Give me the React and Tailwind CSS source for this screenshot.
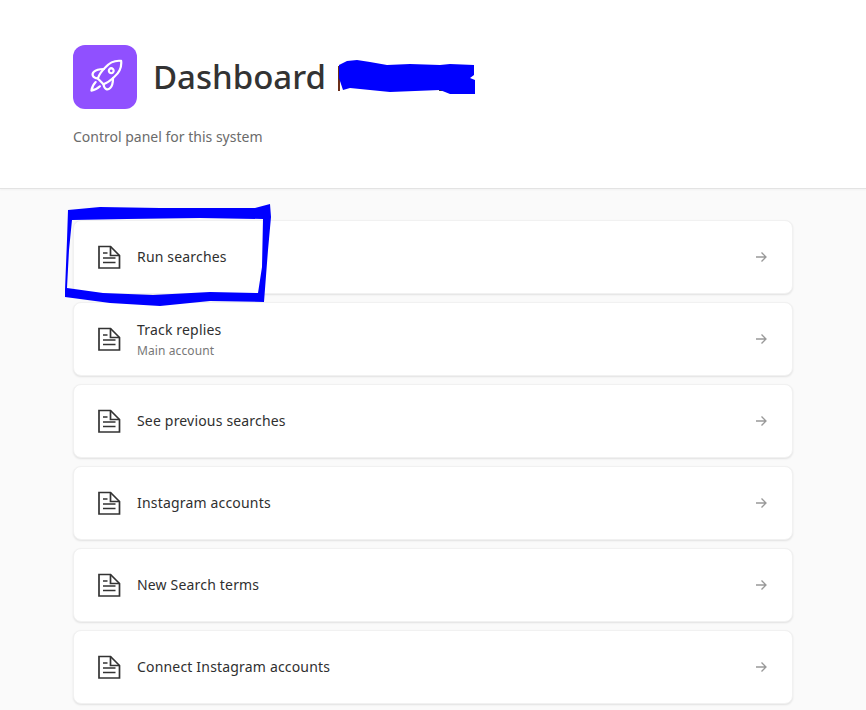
const items = [
  { title: "Run searches" },
  { title: "Track replies", sub: "Main account" },
  { title: "See previous searches" },
  { title: "Instagram accounts" },
  { title: "New Search terms" },
  { title: "Connect Instagram accounts" },
];

function DocIcon() {
  return (
    <svg width="24" height="24" viewBox="0 0 24 24" fill="none" stroke="#333333" strokeWidth="1.7" className="shrink-0">
      <path d="M1 1.5H12.5L21.5 10.5V23H1Z" />
      <path d="M12.5 1.5V10.5H21.5" />
      <path d="M5 8H9.5M5 13H17.5M5 17.5H17.5" />
    </svg>
  );
}

function ArrowIcon() {
  return (
    <svg width="12" height="12" viewBox="0 0 12 12" fill="none" stroke="#999999" strokeWidth="1.3" className="shrink-0">
      <path d="M1 6h10M6.5 1.5 11 6l-4.5 4.5" />
    </svg>
  );
}

function Rocket() {
  return (
    <svg width="36" height="36" viewBox="0 0 36 36" fill="none" stroke="#ffffff" strokeWidth="2.2" strokeLinejoin="round" strokeLinecap="round">
      <g transform="translate(20 16) rotate(45)">
        <path d="M0 -20C5 -16 7 -10 6.5 -4C6.5 1 5.5 6 4 9H-4C-5.5 6 -6.5 1 -6.5 -4C-7 -10 -5 -16 0 -20Z" />
        <circle cx="0" cy="-6" r="2.4" />
        <path d="M-6.5 -2C-9.5 1 -11.5 4 -11.5 7C-11.5 11 -8 12 -4 9" />
        <path d="M6.5 -2C9.5 1 11.5 4 11.5 7C11.5 11 8 12 4 9" />
        <path d="M-3 13C-3 17 -1.5 20 0 22C1.5 20 3 17 3 13" />
      </g>
    </svg>
  );
}

export default function App() {
  return (
    <div className="relative h-[710px] overflow-hidden bg-[#fafafa] font-['Noto_Sans','Open_Sans',sans-serif]">
      <header className="h-[189px] border-b border-[#e3e3e3] bg-white px-[73px] pt-[45px] shadow-[0_1px_2px_rgba(0,0,0,0.04)]">
        <div className="flex items-center gap-4">
          <div className="flex h-16 w-16 items-center justify-center rounded-xl bg-[#9050ff]">
            <Rocket />
          </div>
          <h1 className="text-[33px] font-medium leading-[64px] text-[#333333]">Dashboard</h1>
        </div>
        <p className="mt-[18px] text-sm leading-5 text-[#6b6b6b]">Control panel for this system</p>
      </header>
      <main className="flex flex-col gap-2 px-[73px] pt-[31px]">
        {items.map((item) => (
          <div
            key={item.title}
            className="flex h-[74px] items-center rounded-lg border border-[#f1f1f1] bg-white pl-6 pr-[25px] shadow-[0_1px_2px_rgba(0,0,0,0.1)]"
          >
            <DocIcon />
            <div className="ml-[15px] flex-1">
              <div className="text-sm font-[450] leading-5 tracking-[0.18px] text-[#2f2f2f]">{item.title}</div>
              {item.sub && <div className="mt-[3px] text-xs leading-4 tracking-[0.1px] text-[#777777]">{item.sub}</div>}
            </div>
            <ArrowIcon />
          </div>
        ))}
      </main>
      <svg className="pointer-events-none absolute left-0 top-0" width="866" height="710" viewBox="0 0 866 710">
        <rect x="338" y="66" width="2" height="25" fill="#6b2f1a" />
        <rect x="439" y="88" width="12" height="3" fill="#333333" />
        <path
          d="M339 65L347 61L357 60L370 62L387 65L410 64L440 65L450 64L474 65L474 75L470 78L475 80L475 94L450 94L440 90L390 92L350 88L343 90L339 78Z"
          fill="#0000ff"
        />
        <path
          fillRule="evenodd"
          d="M68 210L100 207L160 208L255 208L270 204L271 217L268 250L264 302L210 301L160 306L110 303L65 297L65 290L67 240Z
             M72 220L127 219L200 218L263 219L262 267L258 293L210 292L153 295L103 293L67 288L69 250Z"
          fill="#0000ff"
        />
      </svg>
    </div>
  );
}
